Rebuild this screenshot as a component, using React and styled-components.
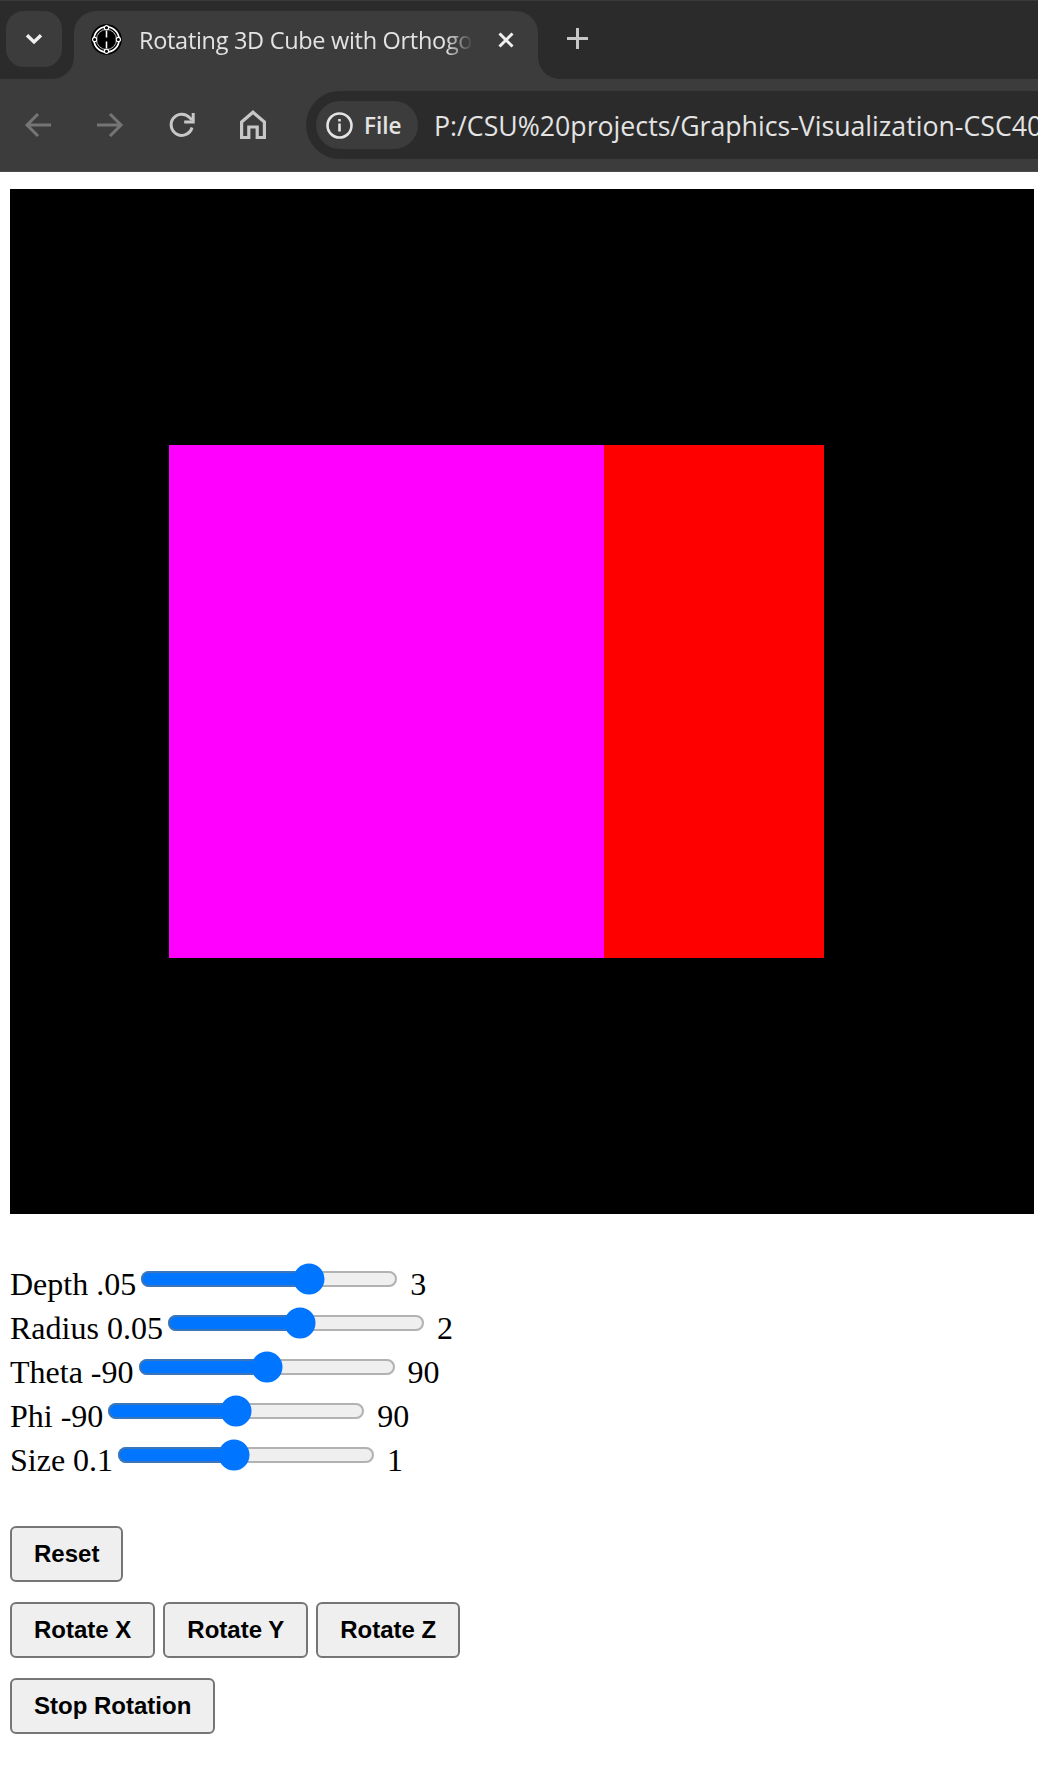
import React from "react";
import styled, { createGlobalStyle } from "styled-components";

const Global = createGlobalStyle`
  html, body { margin: 0; padding: 0; background: #fff; overflow: hidden; }
`;

const UI_FONT = `"Open Sans", "Noto Sans", sans-serif`;

const Page = styled.div`
  width: 1038px;
  height: 1774px;
  overflow: hidden;
`;
const Chrome = styled.header`
  height: 172px;
  background: #3c3c3c;
  overflow: hidden;
  font-family: ${UI_FONT};
`;
const TabStrip = styled.div`
  display: flex;
  height: 79px;
`;
const StripStart = styled.div`
  width: 74px;
  flex: none;
  box-sizing: border-box;
  padding: 11px 0 0 6px;
  background: #2b2b2b;
  border-top: 1px solid #3a3a3a;
  border-radius: 0 0 22px 0;
`;
const TabListButton = styled.div`
  width: 56px;
  height: 56px;
  margin-top: -1px;
  border-radius: 18px;
  background: #3c3c3c;
  display: flex;
  align-items: center;
  justify-content: center;
`;
const TabWell = styled.div`
  width: 464px;
  flex: none;
  box-sizing: border-box;
  padding-top: 11px;
  background: #2b2b2b;
  border-top: 1px solid #3a3a3a;
  display: flex;
`;
const Tab = styled.div`
  flex: 1;
  margin-top: -1px;
  background: #3c3c3c;
  border-radius: 22px 22px 0 0;
  display: flex;
  align-items: flex-start;
  padding: 13px 0 0 17px;
  min-width: 0;
`;
const FaviconSvg = styled.svg`
  flex: none;
`;
const TabTitle = styled.span`
  width: 334px;
  margin-left: 17px;
  margin-top: 1px;
  flex: none;
  overflow: hidden;
  white-space: nowrap;
  font-size: 23.5px;
  letter-spacing: -0.3px;
  line-height: 30px;
  color: #e3e3e3;
  -webkit-mask-image: linear-gradient(to right, #000 92%, transparent 100%);
  mask-image: linear-gradient(to right, #000 92%, transparent 100%);
`;
const CloseIcon = styled.svg`
  margin: 8px 0 0 25px;
  flex: none;
`;
const StripEnd = styled.div`
  flex: 1;
  background: #2b2b2b;
  border-top: 1px solid #3a3a3a;
  border-radius: 0 0 0 22px;
  padding: 27px 0 0 29px;
`;
const Toolbar = styled.div`
  height: 93px;
  box-sizing: border-box;
  padding: 12px 0 0 0;
  display: flex;
  align-items: flex-start;
  border-bottom: 1px solid #4d4d4d;
`;
const NavIcons = styled.div`
  width: 306px;
  flex: none;
  height: 68px;
  display: flex;
  align-items: center;
  gap: 44px;
  padding-left: 24px;
  box-sizing: border-box;
`;
const AddressBar = styled.div`
  flex: 1;
  height: 68px;
  background: #2b2b2b;
  border-radius: 34px 0 0 34px;
  box-sizing: border-box;
  padding-left: 10px;
  display: flex;
  align-items: center;
  overflow: hidden;
`;
const SiteChip = styled.div`
  width: 102px;
  height: 48px;
  flex: none;
  box-sizing: border-box;
  padding-left: 10px;
  border-radius: 24px;
  background: #3c3c3c;
  display: flex;
  align-items: center;
  gap: 11px;
  font-size: 22.5px;
  font-weight: 600;
  color: #e3e3e3;
`;
const Url = styled.span`
  margin-left: 16px;
  font-size: 26.7px;
  white-space: nowrap;
  color: #e3e3e3;
`;

const Main = styled.main`
  padding: 17px 0 0 10px;
`;
const Scene = styled.svg`
  display: block;
`;
const Controls = styled.div`
  margin-top: 45px;
  font-family: "Liberation Serif", serif;
  font-size: 32px;
  line-height: 44px;
  color: #000;
`;
const Row = styled.div`
  white-space: nowrap;
  height: 44px;
`;
const Range = styled.input.attrs({ type: "range", step: "any" })`
  zoom: 2;
`;
const ButtonRows = styled.div`
  margin-top: 47px;
  display: flex;
  flex-direction: column;
  gap: 20px;
`;
const ButtonRow = styled.div`
  display: flex;
  gap: 8px;
`;
const Button = styled.button`
  height: 56px;
  box-sizing: border-box;
  padding: 0 22px;
  background: #efefef;
  border: 2px solid #767676;
  border-radius: 6px;
  font-family: "Liberation Sans", Arial, sans-serif;
  font-size: 24px;
  font-weight: 700;
  color: #000;
`;

const sliders = [
  { id: "depth", label: "Depth .05", min: 0.05, max: 3, value: 2.04, end: "3" },
  { id: "radius", label: "Radius 0.05", min: 0.05, max: 2, value: 1.06, end: "2" },
  { id: "theta", label: "Theta -90", min: -90, max: 90, value: 0, end: "90" },
  { id: "phi", label: "Phi -90", min: -90, max: 90, value: 0, end: "90" },
  { id: "size", label: "Size 0.1", min: 0.1, max: 1, value: 0.5, end: "1" },
];

const Chevron = () => (
  <svg width="18" height="12" viewBox="0 0 18 12" fill="none" stroke="#f0f0f0" strokeWidth="3.4">
    <path d="M2 2.2 9 9 16 2.2" />
  </svg>
);
const Favicon = () => (
  <FaviconSvg width="31" height="31" viewBox="0 0 32 32">
    <circle cx="16" cy="16" r="15.8" fill="#000" />
    <circle cx="16" cy="16" r="13" fill="none" stroke="#fff" strokeWidth="1.8" />
    <circle cx="16" cy="16" r="10.4" fill="none" stroke="#ccc" strokeWidth="1" />
    <path d="M16 7v7M16 18v7" stroke="#fff" strokeWidth="1.6" />
    <g fill="#000" stroke="#fff" strokeWidth="1.2">
      <circle cx="16" cy="3.8" r="2.2" />
      <circle cx="16" cy="28.2" r="2.2" />
      <circle cx="3.8" cy="16" r="2.2" />
      <circle cx="28.2" cy="16" r="2.2" />
    </g>
  </FaviconSvg>
);
const BackIcon = () => (
  <svg width="28" height="28" viewBox="0 0 28 28" fill="none" stroke="#757575" strokeWidth="3">
    <path d="M27 14H4M14 3 3 14l11 11" />
  </svg>
);
const ForwardIcon = () => (
  <svg width="28" height="28" viewBox="0 0 28 28" fill="none" stroke="#757575" strokeWidth="3">
    <path d="M1 14h23M14 3l11 11-11 11" />
  </svg>
);
const ReloadIcon = () => (
  <svg width="28" height="28" viewBox="0 0 28 28" fill="none" stroke="#c7c7c7" strokeWidth="3">
    <path d="M24 16.5A10.6 10.6 0 1 1 21.5 6.5L24 9" />
    <path d="M25.2 2v9h-9" />
  </svg>
);
const HomeIcon = () => (
  <svg width="26" height="30" viewBox="0 0 26 30" fill="none" stroke="#c7c7c7" strokeWidth="3.2">
    <path d="M1.6 27.5V12L13 2.2 24.4 12v15.5h-7.2V17H8.8v10.5z" />
  </svg>
);
const InfoIcon = () => (
  <svg width="27" height="27" viewBox="0 0 27 27" fill="none" stroke="#e3e3e3" strokeWidth="2.6">
    <circle cx="13.5" cy="13.5" r="12" />
    <path d="M13.5 11.5v8" />
    <path d="M13.5 7v2.6" />
  </svg>
);

export default function App() {
  return (
    <Page>
      <Global />
      <Chrome>
        <TabStrip>
          <StripStart>
            <TabListButton><Chevron /></TabListButton>
          </StripStart>
          <TabWell>
            <Tab>
              <Favicon />
              <TabTitle>Rotating 3D Cube with Orthogo</TabTitle>
              <CloseIcon width="16" height="16" viewBox="0 0 16 16" fill="none" stroke="#f0f0f0" strokeWidth="3">
                <path d="M1.5 1.5 14.5 14.5M14.5 1.5 1.5 14.5" />
              </CloseIcon>
            </Tab>
          </TabWell>
          <StripEnd>
            <svg width="21" height="21" viewBox="0 0 21 21" fill="none" stroke="#c7c7c7" strokeWidth="3">
              <path d="M0 10.5h21M10.5 0v21" />
            </svg>
          </StripEnd>
        </TabStrip>
        <Toolbar>
          <NavIcons>
            <BackIcon />
            <ForwardIcon />
            <ReloadIcon />
            <HomeIcon />
          </NavIcons>
          <AddressBar>
            <SiteChip><InfoIcon />File</SiteChip>
            <Url>P:/CSU%20projects/Graphics-Visualization-CSC40</Url>
          </AddressBar>
        </Toolbar>
      </Chrome>
      <Main>
        <Scene width="1024" height="1025" viewBox="0 0 1024 1025">
          <rect width="1024" height="1025" fill="#000" />
          <rect x="159" y="256" width="435" height="513" fill="#f0f" />
          <rect x="594" y="256" width="220" height="513" fill="#f00" />
        </Scene>
        <Controls>
          {sliders.map((s) => (
            <Row key={s.id}>
              {s.label}
              <Range min={s.min} max={s.max} defaultValue={s.value} aria-label={s.id} />
              {" "}{s.end}
            </Row>
          ))}
        </Controls>
        <ButtonRows>
          <ButtonRow><Button>Reset</Button></ButtonRow>
          <ButtonRow>
            <Button>Rotate X</Button>
            <Button>Rotate Y</Button>
            <Button>Rotate Z</Button>
          </ButtonRow>
          <ButtonRow><Button>Stop Rotation</Button></ButtonRow>
        </ButtonRows>
      </Main>
    </Page>
  );
}
